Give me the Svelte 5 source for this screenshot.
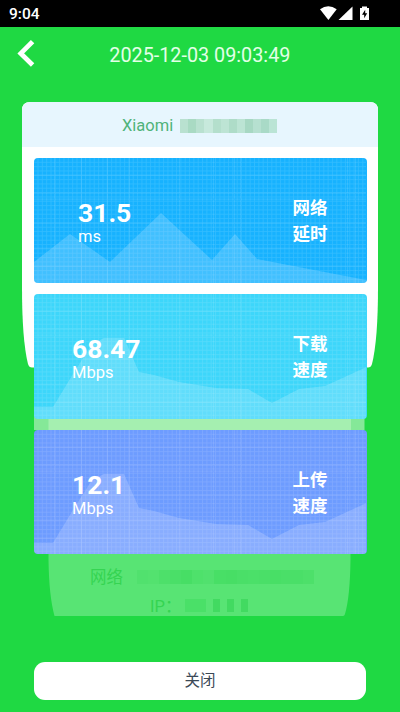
<script>
  const rise = 'M0 113H19L39 80L58 50L70 44H90L105 78L120 81L145 88L182 94L214 95L238 109L265 95L291 92L332.5 73V125H0Z';
  const metrics = [
    { kind: 'delay', value: '31.5', unit: 'ms', label: ['网络', '延时'], color: '#19b3ff',
      path: 'M0 104L36 76L76 104L127 55L178 102L201 76L223 101L332.5 122V125H0Z' },
    { kind: 'down', value: '68.47', unit: 'Mbps', label: ['下载', '速度'], color: '#3fd6fa', path: rise },
    { kind: 'up', value: '12.1', unit: 'Mbps', label: ['上传', '速度'], color: '#6f9dff', path: rise }
  ];
  const majorX = [20, 47, 73, 95, 145, 179, 200, 206, 313, 321];
  const majorY = [17, 35, 41, 65, 90, 108];
  const modelMask = ['#b9e1d0', '#a9dac3', '#b9e1d0', '#c7e9dc', '#b4dfcc', '#bde4d4', '#aedcc8', '#bce4d4', '#a7d8c3', '#b6e0d0', '#a9dac7', '#bae4d5'];
  const netMask = [.3, .2, .45, .6, .75, .4, .3, .65, .75, .6, .55, .6, .65, .6, .6, .5];
</script>

<div class="screen">
  <header class="status">
    <span>9:04</span>
    <svg width="52" height="16" viewBox="0 0 52 16" aria-hidden="true">
      <path d="M0 3.2Q8.3-2.8 16.7 3.2L8.4 14Z" fill="#fff" />
      <path d="M18.5 14L32.5 .5V14Z" fill="#fff" />
      <path d="M40 2H42V.4H47V2H49V14H40Z" fill="#fff" />
      <path d="M45.2 3.8L42 8.7H44.2V12.2L47.2 7.3H45.2Z" fill="#000" />
    </svg>
  </header>
  <nav>
    <svg class="back" width="18" height="28" viewBox="0 0 18 28" aria-hidden="true">
      <path d="M15.6 2.6L3.8 14.4L15.6 26" fill="none" stroke="#fff" stroke-width="4.8" />
    </svg>
    <h1>2025-12-03 09:03:49</h1>
  </nav>

  <main>
    <svg class="paper" width="356" height="515" viewBox="0 0 356 515" aria-hidden="true">
      <path d="M0 8Q0 0 8 0H348Q356 0 356 8V185Q356 238 350 262Q349 265.5 346 265.5H10Q7 265.5 6 262Q0 238 0 185Z" fill="#fff" />
      <path d="M12 265.5H342.5V328H12Z" fill="#85e898" />
      <path d="M26.5 265.5H329V328H26.5Z" fill="#a5efb0" />
      <path d="M26.5 440H328.5V458Q328 495 323 512Q322.5 514 321 514H32.5Q27 494 26.5 458Z" fill="#58e474" />
    </svg>
    <div class="model">
      <span>Xiaomi</span>
      <span class="mask">{#each modelMask as c}<i style="background:{c}"></i>{/each}</span>
    </div>
    <div class="metrics">
      {#each metrics as m}
        <section class="card {m.kind}" style="background-color:{m.color}">
          <svg class="chart" width="332.5" height="125" viewBox="0 0 332.5 125" aria-hidden="true">
            <path d={m.path} fill="#fff" opacity=".18" />
            <g stroke="#fff" stroke-width=".8" opacity=".12">
              {#each Array(76) as _, i}<path d="M{4 + i * 4.33} 0V125" />{/each}
              {#each Array(28) as _, i}<path d="M0 {4.3 + i * 4.33}H332.5" />{/each}
            </g>
            <g stroke="#fff" stroke-width="1" opacity=".1">
              {#each majorX as x}<path d="M{x + .5} 0V125" />{/each}
              {#each majorY as y}<path d="M0 {y + .2}H332.5" />{/each}
            </g>
          </svg>
          <div class="reading"><strong>{m.value}</strong><span>{m.unit}</span></div>
          <div class="label">{#each m.label as line}<span>{line}</span>{/each}</div>
        </section>
      {/each}
    </div>
    <div class="network">
      <div class="row first"><span>网络</span><span class="netmask">{#each netMask as o}<i style="opacity:{o}"></i>{/each}</span></div>
      <div class="row second"><span>IP：</span><span class="ipmask"><i class="wide"></i><i></i><i></i><i></i></span></div>
    </div>
  </main>
  <button>关闭</button>
</div>

<style>
  :global(body) { margin: 0; background: #1fd943; }
  .screen { width: 400px; height: 712px; overflow: hidden; background: #1fd943; font-family: Roboto, "Noto Sans CJK SC", sans-serif; display: flex; flex-direction: column; }
  .status { height: 27px; flex: none; box-sizing: border-box; background: #000; color: #fff; display: flex; justify-content: space-between; padding: 6px 28px 0 9px; font-size: 15.5px; font-weight: 500; line-height: 17px; }
  nav { height: 75px; flex: none; box-sizing: border-box; display: flex; padding: 12px 0 0 17px; }
  nav .back { flex: none; }
  h1 { margin: 4px 0 0 74.3px; color: #e3ffe7; font-size: 19.8px; line-height: 25px; font-weight: 400; white-space: nowrap; }
  main { width: 356px; height: 515px; margin: 0 22px; position: relative; flex: none; display: flex; flex-direction: column; }
  .paper { position: absolute; inset: 0; }
  .model { height: 45px; flex: none; position: relative; box-sizing: border-box; background: #e7f6fe; border-radius: 8px 8px 0 0; display: flex; align-items: center; padding: 2px 0 0 100px; color: #50b37a; font-size: 16.5px; }
  .mask { display: flex; width: 97px; height: 14px; margin-left: 7px; }
  .mask i { flex: 1; }
  .metrics { flex: none; position: relative; padding: 11px 11.5px 0; display: flex; flex-direction: column; gap: 11px; }
  .card { height: 124.8px; flex: none; box-sizing: border-box; position: relative; overflow: hidden; border-radius: 4px; color: #fff; display: flex; justify-content: space-between; padding: 37.3px 39px 0 38.5px; }
  .card.delay { padding-top: 36.5px; padding-left: 44.5px; }
  .chart { position: absolute; inset: 0; }
  .reading { position: relative; display: flex; flex-direction: column; padding-top: 4px; }
  .reading strong { font-size: 26.5px; line-height: 28px; font-weight: 700; letter-spacing: 0; }
  .reading span { font-size: 16.5px; line-height: 20px; }
  .label { position: relative; display: flex; flex-direction: column; font-size: 17.5px; line-height: 26px; font-weight: 700; }
  .network { flex: none; position: relative; color: #35d452; font-size: 16.5px; padding-top: 10px; }
  .row { display: flex; align-items: center; height: 24px; }
  .first { padding-left: 68px; }
  .second { padding-left: 128px; margin-top: 4.5px; }
  .netmask { display: flex; width: 177px; height: 14px; margin: 2px 0 0 14px; }
  .netmask i { flex: 1; background: #41dc60; }
  .ipmask { display: flex; gap: 7px; margin: 2px 0 0 4px; }
  .ipmask i { width: 7px; height: 13px; background: #42da61; }
  .ipmask .wide { width: 21px; background: #4ae068; }
  button { margin: 45px 34px 0; width: 332px; height: 38px; flex: none; padding: 1px 0 0; border: 0; border-radius: 11px; background: #fff; color: #3b4956; font: 15.5px/37px Roboto, "Noto Sans CJK SC", sans-serif; }
</style>
